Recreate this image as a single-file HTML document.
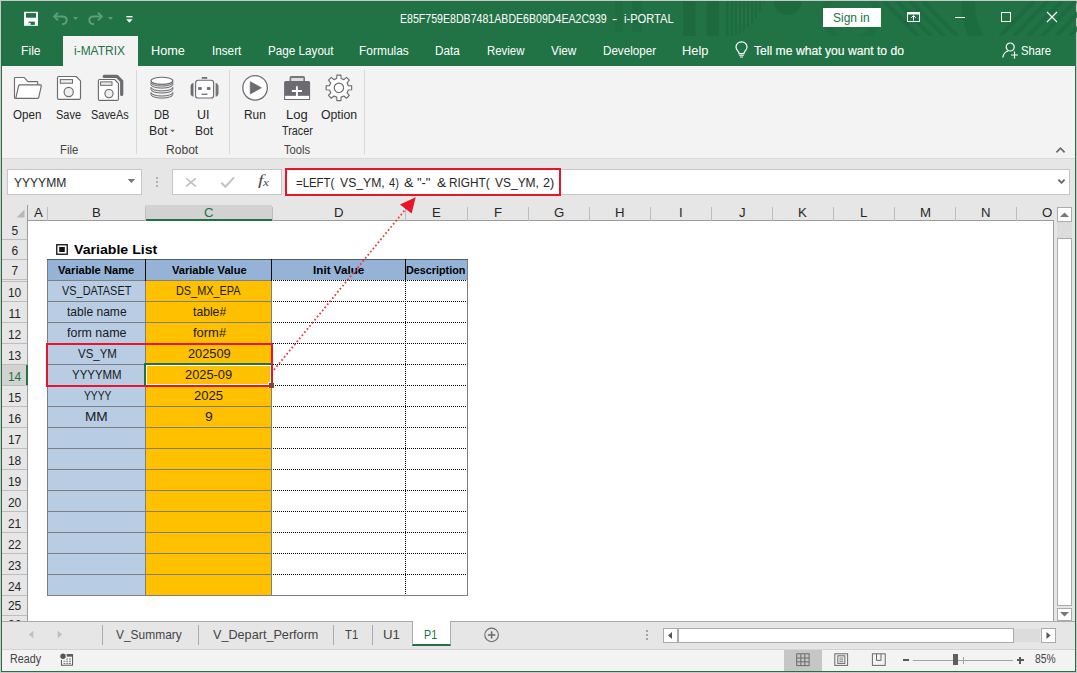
<!DOCTYPE html>
<html lang="en">
<head>
<meta charset="utf-8">
<title>i-PORTAL</title>
<style>
*{box-sizing:border-box;margin:0;padding:0}
html,body{width:1077px;height:673px;overflow:hidden;background:#217346}
body{font-family:"Liberation Sans","NanumGothic",sans-serif;font-size:12px;color:#262626;position:relative}
.a{position:absolute}
.t{position:absolute;white-space:pre;line-height:1;transform-origin:0 0}
svg{position:absolute;overflow:visible}
.hl{position:absolute;height:1px}
.vl{position:absolute;width:1px}
</style>
</head>
<body>
<!-- window frame -->
<div class="a" style="left:0;top:0;width:1077px;height:673px;background:#217346"></div>
<div class="a" style="left:0;top:0;width:1px;height:673px;background:#cdc7ca"></div>
<div class="a" style="left:0;top:0;width:1077px;height:1px;background:#cdc7ca"></div>
<div class="a" style="left:1076px;top:0;width:1px;height:673px;background:#cdc7ca"></div>
<div class="a" style="left:0;top:672px;width:1077px;height:1px;background:#cdc7ca"></div>

<!-- title bar pattern -->
<svg class="a" style="left:0;top:1px" width="1075" height="35" viewBox="0 0 1075 35">
<defs><clipPath id="cp1"><circle cx="712" cy="-14" r="54"/></clipPath><clipPath id="cp0"><rect x="0" y="0" width="1077" height="35"/></clipPath></defs>
<g clip-path="url(#cp0)">
<rect x="615" y="0" width="8" height="31" fill="#1d6a3f" opacity="0.6"/>
<rect x="632" y="0" width="10" height="31" fill="#1d6a3f" opacity="0.6"/>
<rect x="683" y="0" width="12.5" height="35" fill="#1d6a3f"/>
<rect x="706.5" y="0" width="12.5" height="35" fill="#1d6a3f"/>
<g clip-path="url(#cp1)">
<rect x="726" y="0" width="2.5" height="35" fill="#1d6a3f"/>
<rect x="731" y="0" width="2" height="35" fill="#1d6a3f"/>
<rect x="735" y="0" width="2" height="35" fill="#1d6a3f"/>
<rect x="739" y="0" width="2" height="35" fill="#1d6a3f"/>
<rect x="743" y="0" width="2" height="35" fill="#1d6a3f"/>
<rect x="747" y="0" width="2" height="35" fill="#1d6a3f"/>
<rect x="751" y="0" width="2" height="35" fill="#1d6a3f"/>
<rect x="755" y="0" width="2" height="35" fill="#1d6a3f"/>
<rect x="759" y="0" width="2" height="35" fill="#1d6a3f"/>
<rect x="763" y="0" width="2" height="35" fill="#1d6a3f"/>
</g>
<circle cx="787.5" cy="0" r="14" fill="#1d6a3f"/>
<circle cx="851" cy="14" r="26" fill="none" stroke="#1d6a3f" stroke-width="7" opacity="0.6"/>
<path d="M884 0L918 35" stroke="#1d6a3f" stroke-width="4" opacity="0.8"/>
<path d="M897 0L931 35" stroke="#1d6a3f" stroke-width="4" opacity="0.8"/>
<path d="M910 0L944 35" stroke="#1d6a3f" stroke-width="4" opacity="0.8"/>
<path d="M923 0L957 35" stroke="#1d6a3f" stroke-width="4" opacity="0.8"/>
<circle cx="1040" cy="2" r="72" fill="none" stroke="#1d6a3f" stroke-width="14" opacity="0.8"/>
<path d="M1000 35L1034 0" stroke="#1d6a3f" stroke-width="4" opacity="0.8"/>
<path d="M1014 35L1048 0" stroke="#1d6a3f" stroke-width="4" opacity="0.8"/>
<path d="M1028 35L1062 0" stroke="#1d6a3f" stroke-width="4" opacity="0.8"/>
<path d="M1042 35L1076 0" stroke="#1d6a3f" stroke-width="4" opacity="0.8"/>
<path d="M1056 35L1090 0" stroke="#1d6a3f" stroke-width="4" opacity="0.8"/>
<path d="M1070 35L1104 0" stroke="#1d6a3f" stroke-width="4" opacity="0.8"/>
</g>
</svg>

<!-- QAT -->
<svg style="left:0;top:0" width="40" height="30" viewBox="0 0 40 30"><rect x="24" y="11.8" width="14" height="14" fill="#fff"/><rect x="26" y="13.1" width="10" height="4.6" fill="#217346"/><rect x="28.6" y="21.6" width="6.2" height="3.3" fill="#217346"/><rect x="28.6" y="22.9" width="1.9" height="2" fill="#fff"/></svg>
<svg style="left:52.5px;top:12px" width="15" height="13" viewBox="0 0 15 13"><path d="M5 0.8L1.2 4.6L5 8.4" fill="none" stroke="#5d9d7c" stroke-width="2"/><path d="M1.5 4.6H9.5C12.5 4.6 13.7 6.4 13.7 8.2C13.7 10.4 12 12 9 12.2" fill="none" stroke="#5d9d7c" stroke-width="2"/></svg>
<svg style="left:73px;top:17px" width="5" height="3" viewBox="0 0 5 3"><path d="M0 0H5L2.5 3Z" fill="#5d9d7c"/></svg>
<svg style="left:87.5px;top:12px" width="15" height="13" viewBox="0 0 15 13"><path d="M10 0.8L13.8 4.6L10 8.4" fill="none" stroke="#5d9d7c" stroke-width="2"/><path d="M13.5 4.6H5.5C2.5 4.6 1.3 6.4 1.3 8.2C1.3 10.4 3 12 6 12.2" fill="none" stroke="#5d9d7c" stroke-width="2"/></svg>
<svg style="left:108px;top:17px" width="5" height="3" viewBox="0 0 5 3"><path d="M0 0H5L2.5 3Z" fill="#5d9d7c"/></svg>
<svg style="left:126px;top:15.5px" width="7" height="7" viewBox="0 0 7 7"><rect x="0.3" y="0" width="6.2" height="1.4" fill="#fff"/><path d="M0.2 3.2H6.6L3.4 6.8Z" fill="#fff"/></svg>

<!-- sign in / window buttons -->
<div class="a" style="left:823px;top:8px;width:58px;height:19px;background:#fff"></div>
<svg style="left:907px;top:12px" width="13" height="10" viewBox="0 0 13 10"><rect x="0.5" y="0.5" width="12" height="9" fill="none" stroke="#fff" stroke-width="1"/><rect x="0.5" y="0.5" width="12" height="2" fill="#fff"/><path d="M6.5 3.6V8.5M4.2 5.8L6.5 3.6L8.8 5.8" fill="none" stroke="#fff" stroke-width="1"/></svg>
<div class="a" style="left:955px;top:17px;width:10px;height:1px;background:#fff"></div>
<div class="a" style="left:1001px;top:12px;width:10px;height:10px;border:1px solid #fff"></div>
<svg style="left:1047px;top:12px" width="10" height="10" viewBox="0 0 10 10"><path d="M0 0L10 10M10 0L0 10" stroke="#fff" stroke-width="1.1"/></svg>
<svg style="left:735px;top:41px" width="13" height="17" viewBox="0 0 13 17"><path d="M6.5 0.8C3.3 0.8 1 3.1 1 6C1 8 2.2 9.2 3.2 10.4C3.8 11.1 4 11.8 4 12.6H9C9 11.8 9.2 11.1 9.8 10.4C10.8 9.2 12 8 12 6C12 3.1 9.7 0.8 6.5 0.8Z" fill="none" stroke="#fff" stroke-width="1.2"/><path d="M4.2 14.3H8.8M5 16H8" stroke="#fff" stroke-width="1.1"/></svg>
<svg style="left:1002px;top:42px" width="17" height="17" viewBox="0 0 17 17"><circle cx="8.2" cy="5" r="4" fill="none" stroke="#fff" stroke-width="1.2"/><path d="M0.8 15.5C1.5 11.5 3.8 9.6 6 9" fill="none" stroke="#fff" stroke-width="1.2"/><path d="M12.5 9.5V16.5M9 13H16" stroke="#fff" stroke-width="1.2"/></svg>

<!-- active tab -->
<div class="a" style="left:63px;top:36px;width:75px;height:30px;background:#f3f3f3"></div>

<!-- ribbon -->
<div class="a" style="left:2px;top:66px;width:1073px;height:92px;background:#f3f3f3"></div>
<div class="a" style="left:2px;top:158px;width:1073px;height:1px;background:#dadada"></div>
<div class="vl" style="left:136px;top:70px;height:84px;background:#d8d8d8"></div>
<div class="vl" style="left:229px;top:70px;height:84px;background:#d8d8d8"></div>
<div class="vl" style="left:364px;top:70px;height:84px;background:#d8d8d8"></div>
<svg style="left:12px;top:74px" width="32" height="28" viewBox="12 74 32 28"><path d="M16.6 98.3L15.2 98.3Q14.5 98.3 14.5 97.5V78.3Q14.5 77.5 15.3 77.5H23.6Q24.3 77.5 24.8 78.1L27.4 81.2Q27.8 81.6 28.4 81.6H37Q37.7 81.6 37.7 82.4V84.9" fill="#fff" stroke="#6c6c70" stroke-width="1.15" stroke-linejoin="round"/><path d="M19.9 84.9H40.6Q41.5 84.9 41.3 85.8L38.7 97.6Q38.5 98.3 37.7 98.3H16.6Q15.8 98.3 16 97.4L18.6 85.8Q18.9 84.9 19.9 84.9Z" fill="#fff" stroke="#6c6c70" stroke-width="1.15" stroke-linejoin="round"/></svg>
<svg style="left:55px;top:74px" width="28" height="28" viewBox="55 74 28 28"><path d="M58.8 76.5H76.2L80.5 80.8V98Q80.5 99.3 79.2 99.3H58.8Q57.5 99.3 57.5 98V77.8Q57.5 76.5 58.8 76.5Z" fill="#fff" stroke="#6c6c70" stroke-width="1.15" stroke-linejoin="round"/><rect x="60.3" y="79.6" width="12.2" height="3.6" fill="#efefef" stroke="#6c6c70" stroke-width="1.05"/><circle cx="68.7" cy="92" r="4.6" fill="#efefef" stroke="#6c6c70" stroke-width="1.15"/></svg>
<svg style="left:95px;top:72px" width="32" height="32" viewBox="95 72 32 32"><path d="M104.2 76.4H117L121.7 81.1V94.4" fill="none" stroke="#6c6c70" stroke-width="3.2" stroke-linejoin="round" stroke-linecap="round"/><path d="M99.6 79.5H114.6L118.4 83.3V99.2Q118.4 100.4 117.2 100.4H99.6Q98.4 100.4 98.4 99.2V80.7Q98.4 79.5 99.6 79.5Z" fill="#fff" stroke="#6c6c70" stroke-width="1.15" stroke-linejoin="round"/><rect x="100.6" y="81.9" width="11.4" height="3.4" fill="#efefef" stroke="#6c6c70" stroke-width="1.05"/><circle cx="109" cy="93.6" r="4.1" fill="#efefef" stroke="#6c6c70" stroke-width="1.15"/></svg>
<svg style="left:149px;top:75px" width="26" height="26" viewBox="149 75 26 26"><path d="M151 82.50A10.9 3.5 0 0 0 172.8 82.50L172.8 84.60A10.9 3.5 0 0 1 151 84.60Z" fill="#e9e9e9" stroke="#6c6c70" stroke-width="1" stroke-linejoin="round"/><path d="M151 87.40A10.9 3.5 0 0 0 172.8 87.40L172.8 89.50A10.9 3.5 0 0 1 151 89.50Z" fill="#e9e9e9" stroke="#6c6c70" stroke-width="1" stroke-linejoin="round"/><path d="M151 92.50A10.9 3.5 0 0 0 172.8 92.50L172.8 94.60A10.9 3.5 0 0 1 151 94.60Z" fill="#e9e9e9" stroke="#6c6c70" stroke-width="1" stroke-linejoin="round"/><ellipse cx="161.9" cy="80.8" rx="10.9" ry="3.6" fill="#fff" stroke="#6c6c70" stroke-width="1.15"/></svg>
<svg style="left:188px;top:75px" width="32" height="26" viewBox="188 75 32 26"><rect x="201.7" y="77" width="5.6" height="1.8" rx="0.6" fill="#6c6c70"/><rect x="195.6" y="80.2" width="18" height="17.8" rx="2.6" fill="#fff" stroke="#6c6c70" stroke-width="1.15"/><path d="M193.5 82.8V96.8Q190.6 96 190.6 93.5V86Q190.6 83.6 193.5 82.8Z" fill="#6c6c70"/><path d="M215.6 82.8V96.8Q218.5 96 218.5 93.5V86Q218.5 83.6 215.6 82.8Z" fill="#777"/><rect x="198.2" y="87.1" width="3.5" height="2.8" fill="#6c6c70"/><rect x="206.9" y="87.1" width="3.5" height="2.8" fill="#6c6c70"/><rect x="201.5" y="93.6" width="6" height="1.3" fill="#6c6c70"/></svg>
<svg style="left:240px;top:73px" width="30" height="30" viewBox="240 73 30 30"><circle cx="255.1" cy="87.8" r="12.3" fill="#fff" stroke="#6c6c70" stroke-width="1.25"/><path d="M250.3 81.7V93.9L261.4 87.8Z" fill="#6c6c70" stroke="#6c6c70" stroke-width="0.8" stroke-linejoin="round"/></svg>
<svg style="left:282px;top:74px" width="30" height="28" viewBox="282 74 30 28"><path d="M289.6 81.2V77.4Q289.6 75.9 291.1 75.9H303.5Q305 75.9 305 77.4V81.2Z" fill="#777"/><rect x="291.2" y="78" width="12.2" height="3" fill="#dedede"/><path d="M284.1 95.5V82.6Q284.1 81.1 285.6 81.1H308.6Q310.1 81.1 310.1 82.6V95.5Z" fill="#6c6c70"/><rect x="284.6" y="95.3" width="25" height="4.2" fill="#fff" stroke="#6c6c70" stroke-width="1"/><path d="M296.9 86.3V96M291.8 91H302" stroke="#fff" stroke-width="1.9"/></svg>
<svg style="left:325px;top:74px" width="29" height="29" viewBox="325 74 29 29"><path d="M336.66 78.46L336.91 75.05L340.89 75.05L341.14 78.46L343.92 79.62L346.50 77.38L349.32 80.20L347.08 82.78L348.24 85.56L351.65 85.81L351.65 89.79L348.24 90.04L347.08 92.82L349.32 95.40L346.50 98.22L343.92 95.98L341.14 97.14L340.89 100.55L336.91 100.55L336.66 97.14L333.88 95.98L331.30 98.22L328.48 95.40L330.72 92.82L329.56 90.04L326.15 89.79L326.15 85.81L329.56 85.56L330.72 82.78L328.48 80.20L331.30 77.38L333.88 79.62Z" fill="#fff" stroke="#6c6c70" stroke-width="1.15" stroke-linejoin="round"/><circle cx="338.9" cy="87.8" r="4.7" fill="#fff" stroke="#6c6c70" stroke-width="1.15"/></svg>
<svg style="left:170px;top:129px" width="5" height="4" viewBox="170 129 5 4"><path d="M170.2 129.7H175L172.6 132.3Z" fill="#6a6a6a"/></svg>
<svg style="left:1055px;top:146px" width="11" height="8" viewBox="1055 146 11 8"><path d="M1056.4 152.4L1060.5 148.2L1064.6 152.4" fill="none" stroke="#6a6a6a" stroke-width="1.7"/></svg>

<!-- formula bar -->
<div class="a" style="left:2px;top:159px;width:1073px;height:46px;background:#e6e6e6"></div>
<div class="a" style="left:7px;top:169px;width:135px;height:26px;background:#fff;border:1px solid #c6c6c6"></div>
<div class="a" style="left:172px;top:169px;width:110px;height:26px;background:#fff;border:1px solid #c6c6c6"></div>
<div class="a" style="left:285px;top:169px;width:785px;height:26px;background:#fff;border:1px solid #c6c6c6"></div>
<div class="a" style="left:285px;top:168px;width:276px;height:28px;border:2px solid #e8152a"></div>
<svg style="left:127px;top:179px" width="9" height="4" viewBox="127 179 9 4"><path d="M127.7 179.1H135.1L131.4 182.9Z" fill="#777"/></svg>
<div class="a" style="left:156px;top:177px;width:2px;height:2px;background:#b0b0b0"></div>
<div class="a" style="left:156px;top:181px;width:2px;height:2px;background:#b0b0b0"></div>
<div class="a" style="left:156px;top:185px;width:2px;height:2px;background:#b0b0b0"></div>
<svg style="left:185px;top:177px" width="12" height="11" viewBox="185 177 12 11"><path d="M186.2 178.2L195.8 186.4M195.8 178.2L186.2 186.4" stroke="#bcbcbc" stroke-width="1.5" fill="none"/></svg>
<svg style="left:220px;top:176px" width="15" height="12" viewBox="220 176 15 12"><path d="M221.3 182.8L225.4 186.8L234 177.4" stroke="#c2c2c2" stroke-width="2" fill="none"/></svg>
<svg style="left:1057px;top:178px" width="9" height="7" viewBox="1057 178 9 7"><path d="M1058.4 179.6L1061.5 182.8L1064.6 179.6" fill="none" stroke="#5f5f5f" stroke-width="1.7"/></svg>

<!-- grid -->
<div class="a" style="left:2px;top:205px;width:1073px;height:416px;background:#e6e6e6"></div>
<div class="a" style="left:28px;top:221px;width:1025px;height:400px;background:#fff"></div>
<div class="a" style="left:145px;top:205px;width:127px;height:16px;background:#d2d2d2;border-bottom:2px solid #217346"></div>
<div class="hl" style="left:28px;top:220px;width:117px;background:#9c9c9c"></div>
<div class="hl" style="left:272px;top:220px;width:782px;background:#9c9c9c"></div>
<div class="vl" style="left:47px;top:207px;height:14px;background:#bdbdbd"></div>
<div class="vl" style="left:145px;top:207px;height:14px;background:#bdbdbd"></div>
<div class="vl" style="left:272px;top:207px;height:14px;background:#bdbdbd"></div>
<div class="vl" style="left:405px;top:207px;height:14px;background:#bdbdbd"></div>
<div class="vl" style="left:467px;top:207px;height:14px;background:#bdbdbd"></div>
<div class="vl" style="left:528px;top:207px;height:14px;background:#bdbdbd"></div>
<div class="vl" style="left:589px;top:207px;height:14px;background:#bdbdbd"></div>
<div class="vl" style="left:650px;top:207px;height:14px;background:#bdbdbd"></div>
<div class="vl" style="left:711px;top:207px;height:14px;background:#bdbdbd"></div>
<div class="vl" style="left:772px;top:207px;height:14px;background:#bdbdbd"></div>
<div class="vl" style="left:833px;top:207px;height:14px;background:#bdbdbd"></div>
<div class="vl" style="left:894px;top:207px;height:14px;background:#bdbdbd"></div>
<div class="vl" style="left:955px;top:207px;height:14px;background:#bdbdbd"></div>
<div class="vl" style="left:1016px;top:207px;height:14px;background:#bdbdbd"></div>
<div class="vl" style="left:27px;top:205px;height:416px;background:#9c9c9c"></div>
<svg style="left:16px;top:209px" width="9" height="9" viewBox="0 0 9 9"><path d="M8.5 0.5V8.5H0.5Z" fill="#b7b7b7"/></svg>
<div class="hl" style="left:2px;top:239px;width:25px;background:#bdbdbd"></div>
<div class="hl" style="left:2px;top:259px;width:25px;background:#bdbdbd"></div>
<div class="hl" style="left:2px;top:279px;width:25px;background:#bdbdbd"></div>
<div class="hl" style="left:2px;top:281px;width:25px;background:#bdbdbd"></div>
<div class="hl" style="left:2px;top:301px;width:25px;background:#bdbdbd"></div>
<div class="hl" style="left:2px;top:322px;width:25px;background:#bdbdbd"></div>
<div class="hl" style="left:2px;top:343px;width:25px;background:#bdbdbd"></div>
<div class="hl" style="left:2px;top:364px;width:25px;background:#bdbdbd"></div>
<div class="hl" style="left:2px;top:385px;width:25px;background:#bdbdbd"></div>
<div class="hl" style="left:2px;top:406px;width:25px;background:#bdbdbd"></div>
<div class="hl" style="left:2px;top:427px;width:25px;background:#bdbdbd"></div>
<div class="hl" style="left:2px;top:448px;width:25px;background:#bdbdbd"></div>
<div class="hl" style="left:2px;top:469px;width:25px;background:#bdbdbd"></div>
<div class="hl" style="left:2px;top:490px;width:25px;background:#bdbdbd"></div>
<div class="hl" style="left:2px;top:511px;width:25px;background:#bdbdbd"></div>
<div class="hl" style="left:2px;top:532px;width:25px;background:#bdbdbd"></div>
<div class="hl" style="left:2px;top:553px;width:25px;background:#bdbdbd"></div>
<div class="hl" style="left:2px;top:574px;width:25px;background:#bdbdbd"></div>
<div class="hl" style="left:2px;top:595px;width:25px;background:#bdbdbd"></div>
<div class="hl" style="left:2px;top:615px;width:25px;background:#bdbdbd"></div>
<div class="a" style="left:2px;top:365px;width:26px;height:20px;background:#d2d2d2;border-right:2px solid #217346"></div>
<div class="vl" style="left:1053px;top:221px;height:400px;background:#9c9c9c"></div>
<div class="a" style="left:1057px;top:207px;width:15px;height:15px;background:#fff;border:1px solid #ababab"></div>
<svg style="left:1060px;top:212px" width="9" height="5" viewBox="0 0 9 5"><path d="M0 5L4.5 0.5L9 5Z" fill="#777"/></svg>
<div class="a" style="left:1057px;top:222px;width:15px;height:16px;background:#dcdcdc"></div>
<div class="a" style="left:1057px;top:238px;width:15px;height:368px;background:#fff;border:1px solid #ababab"></div>
<div class="a" style="left:1057px;top:608px;width:15px;height:13px;background:#fff;border:1px solid #ababab"></div>
<svg style="left:1060px;top:612px" width="9" height="5" viewBox="0 0 9 5"><path d="M0 0L4.5 4.5L9 0Z" fill="#777"/></svg>
<div class="a" style="left:48px;top:260px;width:419px;height:20px;background:#95b3d7"></div>
<div class="a" style="left:48px;top:281px;width:97px;height:314px;background:#b8cce4"></div>
<div class="a" style="left:146px;top:281px;width:126px;height:314px;background:#ffc000"></div>
<div class="hl" style="left:47px;top:280px;width:225px;background:#7f7f7f"></div>
<div class="hl" style="left:47px;top:301px;width:225px;background:#7f7f7f"></div>
<div class="hl" style="left:47px;top:322px;width:225px;background:#7f7f7f"></div>
<div class="hl" style="left:47px;top:343px;width:225px;background:#7f7f7f"></div>
<div class="hl" style="left:47px;top:364px;width:225px;background:#7f7f7f"></div>
<div class="hl" style="left:47px;top:385px;width:225px;background:#7f7f7f"></div>
<div class="hl" style="left:47px;top:406px;width:225px;background:#7f7f7f"></div>
<div class="hl" style="left:47px;top:427px;width:225px;background:#7f7f7f"></div>
<div class="hl" style="left:47px;top:448px;width:225px;background:#7f7f7f"></div>
<div class="hl" style="left:47px;top:469px;width:225px;background:#7f7f7f"></div>
<div class="hl" style="left:47px;top:490px;width:225px;background:#7f7f7f"></div>
<div class="hl" style="left:47px;top:511px;width:225px;background:#7f7f7f"></div>
<div class="hl" style="left:47px;top:532px;width:225px;background:#7f7f7f"></div>
<div class="hl" style="left:47px;top:553px;width:225px;background:#7f7f7f"></div>
<div class="hl" style="left:47px;top:574px;width:225px;background:#7f7f7f"></div>
<div class="hl" style="left:47px;top:595px;width:225px;background:#7f7f7f"></div>
<div class="vl" style="left:47px;top:259px;height:337px;background:#7f7f7f"></div>
<div class="vl" style="left:145px;top:281px;height:315px;background:#7f7f7f"></div>
<div class="vl" style="left:271px;top:281px;height:315px;background:#7f7f7f"></div>
<div class="vl" style="left:467px;top:259px;height:337px;background:#7f7f7f"></div>
<div class="hl" style="left:272px;top:595px;width:196px;background:#7f7f7f"></div>
<div class="hl" style="left:273px;top:280px;width:194px;background:repeating-linear-gradient(90deg,#000 0 1px,transparent 1px 2px)"></div>
<div class="hl" style="left:273px;top:301px;width:194px;background:repeating-linear-gradient(90deg,#000 0 1px,transparent 1px 2px)"></div>
<div class="hl" style="left:273px;top:322px;width:194px;background:repeating-linear-gradient(90deg,#000 0 1px,transparent 1px 2px)"></div>
<div class="hl" style="left:273px;top:343px;width:194px;background:repeating-linear-gradient(90deg,#000 0 1px,transparent 1px 2px)"></div>
<div class="hl" style="left:273px;top:364px;width:194px;background:repeating-linear-gradient(90deg,#000 0 1px,transparent 1px 2px)"></div>
<div class="hl" style="left:273px;top:385px;width:194px;background:repeating-linear-gradient(90deg,#000 0 1px,transparent 1px 2px)"></div>
<div class="hl" style="left:273px;top:406px;width:194px;background:repeating-linear-gradient(90deg,#000 0 1px,transparent 1px 2px)"></div>
<div class="hl" style="left:273px;top:427px;width:194px;background:repeating-linear-gradient(90deg,#000 0 1px,transparent 1px 2px)"></div>
<div class="hl" style="left:273px;top:448px;width:194px;background:repeating-linear-gradient(90deg,#000 0 1px,transparent 1px 2px)"></div>
<div class="hl" style="left:273px;top:469px;width:194px;background:repeating-linear-gradient(90deg,#000 0 1px,transparent 1px 2px)"></div>
<div class="hl" style="left:273px;top:490px;width:194px;background:repeating-linear-gradient(90deg,#000 0 1px,transparent 1px 2px)"></div>
<div class="hl" style="left:273px;top:511px;width:194px;background:repeating-linear-gradient(90deg,#000 0 1px,transparent 1px 2px)"></div>
<div class="hl" style="left:273px;top:532px;width:194px;background:repeating-linear-gradient(90deg,#000 0 1px,transparent 1px 2px)"></div>
<div class="hl" style="left:273px;top:553px;width:194px;background:repeating-linear-gradient(90deg,#000 0 1px,transparent 1px 2px)"></div>
<div class="hl" style="left:273px;top:574px;width:194px;background:repeating-linear-gradient(90deg,#000 0 1px,transparent 1px 2px)"></div>
<div class="vl" style="left:405px;top:281px;height:314px;background:repeating-linear-gradient(180deg,#000 0 1px,transparent 1px 2px)"></div>
<div class="hl" style="left:47px;top:259px;width:421px;background:#595959"></div>
<div class="a" style="left:145px;top:259px;width:1px;height:22px;background:#0a0a0a"></div>
<div class="a" style="left:271px;top:259px;width:1px;height:22px;background:#0a0a0a"></div>
<div class="a" style="left:405px;top:259px;width:1px;height:22px;background:#0a0a0a"></div>
<svg style="left:56px;top:244px" width="12" height="11" viewBox="0 0 12 11"><rect x="0.75" y="0.75" width="10.5" height="9.5" fill="#fff" stroke="#111" stroke-width="1.3"/><rect x="3.2" y="3" width="5.6" height="5" fill="#111"/></svg>

<!-- sheet tabs bar -->
<div class="a" style="left:2px;top:621px;width:1073px;height:28px;background:#e6e6e6"></div>
<div class="hl" style="left:2px;top:621px;width:1073px;background:#ababab"></div>
<div class="a" style="left:412px;top:621px;width:39px;height:25px;background:#fff;border-left:1px solid #ababab;border-right:1px solid #ababab;border-bottom:2px solid #217346"></div>
<div class="vl" style="left:102px;top:625px;height:20px;background:#ababab"></div>
<div class="vl" style="left:198px;top:625px;height:20px;background:#ababab"></div>
<div class="vl" style="left:333px;top:625px;height:20px;background:#ababab"></div>
<div class="vl" style="left:372px;top:625px;height:20px;background:#ababab"></div>
<svg style="left:28px;top:630px" width="6" height="9" viewBox="28 630 6 9"><path d="M33.3 630.8L28.8 634.5L33.3 638.2Z" fill="#bfbfbf"/></svg>
<svg style="left:57px;top:630px" width="6" height="9" viewBox="57 630 6 9"><path d="M57.7 630.8L62.2 634.5L57.7 638.2Z" fill="#bfbfbf"/></svg>
<svg style="left:483px;top:626px" width="18" height="18" viewBox="483 626 18 18"><circle cx="491.6" cy="634.9" r="6.8" fill="none" stroke="#6a6a6a" stroke-width="1.1"/><path d="M491.6 631.2V638.6M487.9 634.9H495.3" stroke="#6a6a6a" stroke-width="1.5"/></svg>
<div class="a" style="left:646px;top:630px;width:2px;height:2px;background:#a3a3a3"></div>
<div class="a" style="left:646px;top:634px;width:2px;height:2px;background:#a3a3a3"></div>
<div class="a" style="left:646px;top:638px;width:2px;height:2px;background:#a3a3a3"></div>
<div class="a" style="left:663px;top:628px;width:15px;height:15px;background:#fff;border:1px solid #ababab"></div>
<svg style="left:667px;top:631px" width="6" height="9" viewBox="667 631 6 9"><path d="M672 632L668 635.5L672 639Z" fill="#555"/></svg>
<div class="a" style="left:1013px;top:629px;width:27px;height:13px;background:#dcdcdc"></div>
<div class="a" style="left:678px;top:628px;width:336px;height:15px;background:#fff;border:1px solid #ababab"></div>
<div class="a" style="left:1041px;top:628px;width:15px;height:15px;background:#fff;border:1px solid #ababab"></div>
<svg style="left:1045px;top:631px" width="6" height="9" viewBox="1045 631 6 9"><path d="M1046.5 632L1050.5 635.5L1046.5 639Z" fill="#555"/></svg>

<!-- status bar -->
<div class="a" style="left:2px;top:649px;width:1073px;height:22px;background:#f3f3f3"></div>
<div class="hl" style="left:2px;top:649px;width:1073px;background:#d4d4d4"></div>
<svg style="left:59px;top:652px" width="16" height="15" viewBox="59 652 16 15"><rect x="61.5" y="654.6" width="11" height="10.6" fill="#fff" stroke="#5e5e5e" stroke-width="1.1"/><rect x="61.5" y="654.1" width="11" height="2.6" fill="#5e5e5e"/><path d="M63.4 659H65.4M66.2 659H68.2M69 659H71M63.4 661.2H65.4M66.2 661.2H68.2M69 661.2H71M63.4 663.4H65.4M66.2 663.4H68.2M69 663.4H71" stroke="#5e5e5e" stroke-width="0.9"/><circle cx="63" cy="656.2" r="3.3" fill="#555" stroke="#f3f3f3" stroke-width="1.2"/></svg>
<div class="a" style="left:784px;top:650px;width:38px;height:21px;background:#c6c6c6"></div>
<svg style="left:795px;top:653px" width="16" height="14" viewBox="795 653 16 14"><rect x="796.7" y="653.8" width="12.4" height="11.8" fill="none" stroke="#6a6a6a" stroke-width="1"/><path d="M800.8 654.2V665.6M804.8 654.2V665.6M796.7 658H808.9M796.7 661.8H808.9" stroke="#6a6a6a" stroke-width="1"/></svg>
<svg style="left:833px;top:653px" width="16" height="14" viewBox="833 653 16 14"><rect x="834.8" y="653.8" width="12.8" height="11.6" fill="none" stroke="#6a6a6a" stroke-width="1"/><rect x="837.8" y="655.8" width="7" height="7.6" fill="none" stroke="#6a6a6a" stroke-width="1"/><path d="M839.4 658H843.2M839.4 659.8H843.2M839.4 661.6H843.2" stroke="#6a6a6a" stroke-width="0.8"/></svg>
<svg style="left:871px;top:653px" width="16" height="14" viewBox="871 653 16 14"><rect x="872.4" y="653.8" width="12.8" height="11.6" fill="none" stroke="#6a6a6a" stroke-width="1"/><path d="M876.5 653.8V660.4H881V653.8" stroke="#6a6a6a" stroke-width="1" fill="none"/></svg>
<div class="a" style="left:903px;top:659px;width:6px;height:2px;background:#5a5a5a"></div>
<div class="hl" style="left:913px;top:660px;width:100px;background:#a3a3a3"></div>
<div class="vl" style="left:963px;top:657px;height:7px;background:#a3a3a3"></div>
<div class="a" style="left:953px;top:654px;width:5px;height:11px;background:#5f5f5f"></div>
<div class="a" style="left:1016.5px;top:659px;width:7px;height:2px;background:#5a5a5a"></div>
<div class="a" style="left:1019px;top:656.5px;width:2px;height:7px;background:#5a5a5a"></div>

<span class="t" style="left:399.65px;top:13.00px;font-size:12.5px;color:#ffffff;font-weight:400;font-family:'Liberation Sans',sans-serif;transform:scaleX(0.8477)">E85F759E8DB7481ABDE6B09D4EA2C939</span>
<span class="t" style="left:612.13px;top:13.00px;font-size:12.5px;color:#ffffff;font-weight:400;font-family:'Liberation Sans',sans-serif;transform:scaleX(1.2667)">-</span>
<span class="t" style="left:623.61px;top:13.00px;font-size:12.5px;color:#ffffff;font-weight:400;font-family:'Liberation Sans',sans-serif;transform:scaleX(0.8909)">i-PORTAL</span>
<span class="t" style="left:833.04px;top:11.60px;font-size:12.5px;color:#217346;font-weight:400;font-family:'Liberation Sans',sans-serif;transform:scaleX(0.9595)">Sign in</span>
<span class="t" style="left:21.03px;top:44.70px;font-size:12.5px;color:#ffffff;font-weight:400;font-family:'Liberation Sans',sans-serif;transform:scaleX(0.9737)">File</span>
<span class="t" style="left:74.24px;top:44.70px;font-size:12.5px;color:#217346;font-weight:400;font-family:'Liberation Sans',sans-serif;transform:scaleX(0.9577)">i-MATRIX</span>
<span class="t" style="left:151.48px;top:44.70px;font-size:12.5px;color:#ffffff;font-weight:400;font-family:'Liberation Sans',sans-serif;transform:scaleX(1.0156)">Home</span>
<span class="t" style="left:211.76px;top:44.70px;font-size:12.5px;color:#ffffff;font-weight:400;font-family:'Liberation Sans',sans-serif;transform:scaleX(0.9367)">Insert</span>
<span class="t" style="left:267.57px;top:44.70px;font-size:12.5px;color:#ffffff;font-weight:400;font-family:'Liberation Sans',sans-serif;transform:scaleX(0.9348)">Page Layout</span>
<span class="t" style="left:359.44px;top:44.70px;font-size:12.5px;color:#ffffff;font-weight:400;font-family:'Liberation Sans',sans-serif;transform:scaleX(0.9569)">Formulas</span>
<span class="t" style="left:435.36px;top:44.70px;font-size:12.5px;color:#ffffff;font-weight:400;font-family:'Liberation Sans',sans-serif;transform:scaleX(0.9360)">Data</span>
<span class="t" style="left:486.59px;top:44.70px;font-size:12.5px;color:#ffffff;font-weight:400;font-family:'Liberation Sans',sans-serif;transform:scaleX(0.9125)">Review</span>
<span class="t" style="left:551.00px;top:44.70px;font-size:12.5px;color:#ffffff;font-weight:400;font-family:'Liberation Sans',sans-serif;transform:scaleX(0.9444)">View</span>
<span class="t" style="left:602.97px;top:44.70px;font-size:12.5px;color:#ffffff;font-weight:400;font-family:'Liberation Sans',sans-serif;transform:scaleX(0.9304)">Developer</span>
<span class="t" style="left:682.18px;top:44.70px;font-size:12.5px;color:#ffffff;font-weight:400;font-family:'Liberation Sans',sans-serif;transform:scaleX(1.0250)">Help</span>
<span class="t" style="left:754.20px;top:44.70px;font-size:12.5px;color:#ffffff;font-weight:400;font-family:'Liberation Sans',sans-serif;-webkit-text-stroke:0.15px #ffffff;transform:scaleX(0.9727)">Tell me what you want to do</span>
<span class="t" style="left:1021.30px;top:44.70px;font-size:12.5px;color:#ffffff;font-weight:400;font-family:'Liberation Sans',sans-serif;transform:scaleX(0.9000)">Share</span>
<span class="t" style="left:12.60px;top:108.70px;font-size:12px;color:#262626;font-weight:400;font-family:'Liberation Sans',sans-serif;transform:scaleX(0.9655)">Open</span>
<span class="t" style="left:56.38px;top:108.70px;font-size:12px;color:#262626;font-weight:400;font-family:'Liberation Sans',sans-serif;transform:scaleX(0.9154)">Save</span>
<span class="t" style="left:91.29px;top:108.70px;font-size:12px;color:#262626;font-weight:400;font-family:'Liberation Sans',sans-serif;transform:scaleX(0.9125)">SaveAs</span>
<span class="t" style="left:153.67px;top:108.70px;font-size:12px;color:#262626;font-weight:400;font-family:'Liberation Sans',sans-serif;transform:scaleX(0.9267)">DB</span>
<span class="t" style="left:148.68px;top:125.30px;font-size:12px;color:#262626;font-weight:400;font-family:'Liberation Sans',sans-serif;transform:scaleX(1.0176)">Bot</span>
<span class="t" style="left:197.36px;top:108.70px;font-size:12px;color:#262626;font-weight:400;font-family:'Liberation Sans',sans-serif;transform:scaleX(1.0400)">UI</span>
<span class="t" style="left:194.59px;top:125.30px;font-size:12px;color:#262626;font-weight:400;font-family:'Liberation Sans',sans-serif;transform:scaleX(1.0059)">Bot</span>
<span class="t" style="left:243.60px;top:108.70px;font-size:12px;color:#262626;font-weight:400;font-family:'Liberation Sans',sans-serif;transform:scaleX(0.9950)">Run</span>
<span class="t" style="left:286.22px;top:108.70px;font-size:12px;color:#262626;font-weight:400;font-family:'Liberation Sans',sans-serif;transform:scaleX(1.0833)">Log</span>
<span class="t" style="left:282.40px;top:125.30px;font-size:12px;color:#262626;font-weight:400;font-family:'Liberation Sans',sans-serif;transform:scaleX(0.9000)">Tracer</span>
<span class="t" style="left:320.70px;top:108.70px;font-size:12px;color:#262626;font-weight:400;font-family:'Liberation Sans',sans-serif;transform:scaleX(1.0229)">Option</span>
<span class="t" style="left:59.86px;top:144.40px;font-size:12px;color:#444;font-weight:400;font-family:'Liberation Sans',sans-serif;transform:scaleX(0.9389)">File</span>
<span class="t" style="left:166.39px;top:144.40px;font-size:12px;color:#444;font-weight:400;font-family:'Liberation Sans',sans-serif;transform:scaleX(1.0065)">Robot</span>
<span class="t" style="left:283.80px;top:144.40px;font-size:12px;color:#444;font-weight:400;font-family:'Liberation Sans',sans-serif;transform:scaleX(0.9357)">Tools</span>
<span class="t" style="left:13.90px;top:177.00px;font-size:12.5px;color:#262626;font-weight:400;font-family:'Liberation Sans',sans-serif;transform:scaleX(0.9642)">YYYYMM</span>
<span class="t" style="left:296.49px;top:177.30px;font-size:12.5px;color:#262626;font-weight:400;font-family:'Liberation Sans',sans-serif;transform:scaleX(0.9122)">=LEFT(</span>
<span class="t" style="left:340.00px;top:177.30px;font-size:12.5px;color:#262626;font-weight:400;font-family:'Liberation Sans',sans-serif;transform:scaleX(0.9756)">VS_YM,</span>
<span class="t" style="left:388.80px;top:177.30px;font-size:12.5px;color:#262626;font-weight:400;font-family:'Liberation Sans',sans-serif;transform:scaleX(0.8818)">4)</span>
<span class="t" style="left:403.70px;top:177.30px;font-size:12.5px;color:#262626;font-weight:400;font-family:'Liberation Sans',sans-serif;transform:scaleX(1.1375)">&amp;</span>
<span class="t" style="left:417.40px;top:177.30px;font-size:12.5px;color:#262626;font-weight:400;font-family:'Liberation Sans',sans-serif;transform:scaleX(1.0308)">&quot;-&quot;</span>
<span class="t" style="left:437.00px;top:177.30px;font-size:12.5px;color:#262626;font-weight:400;font-family:'Liberation Sans',sans-serif;transform:scaleX(1.1000)">&amp;</span>
<span class="t" style="left:449.06px;top:177.30px;font-size:12.5px;color:#262626;font-weight:400;font-family:'Liberation Sans',sans-serif;transform:scaleX(0.9429)">RIGHT(</span>
<span class="t" style="left:495.20px;top:177.30px;font-size:12.5px;color:#262626;font-weight:400;font-family:'Liberation Sans',sans-serif;transform:scaleX(0.9578)">VS_YM,</span>
<span class="t" style="left:542.59px;top:177.30px;font-size:12.5px;color:#262626;font-weight:400;font-family:'Liberation Sans',sans-serif;transform:scaleX(1.0100)">2)</span>
<span class="t" style="left:257.50px;top:174.30px;font-size:14px;color:#4a4a4a;font-weight:400;font-family:'Liberation Serif',serif;font-style:italic;transform:scaleX(1.4167)">f</span>
<span class="t" style="left:263.20px;top:178.20px;font-size:10px;color:#4a4a4a;font-weight:400;font-family:'Liberation Serif',serif;font-style:italic;transform:scaleX(1.3500)">x</span>
<span class="t" style="left:74.30px;top:242.90px;font-size:13.5px;color:#000;font-weight:700;font-family:'Liberation Sans','NanumGothic',sans-serif;transform:scaleX(1.0468)">Variable List</span>
<span class="t" style="left:58.30px;top:264.40px;font-size:11.7px;color:#000;font-weight:700;font-family:'Liberation Sans','NanumGothic',sans-serif;transform:scaleX(0.9550)">Variable Name</span>
<span class="t" style="left:171.50px;top:264.40px;font-size:11.7px;color:#000;font-weight:700;font-family:'Liberation Sans','NanumGothic',sans-serif;transform:scaleX(0.9487)">Variable Value</span>
<span class="t" style="left:313.00px;top:264.40px;font-size:11.7px;color:#000;font-weight:700;font-family:'Liberation Sans','NanumGothic',sans-serif;transform:scaleX(1.0000)">Init Value</span>
<span class="t" style="left:406.48px;top:264.40px;font-size:11.7px;color:#000;font-weight:700;font-family:'Liberation Sans','NanumGothic',sans-serif;transform:scaleX(0.9238)">Description</span>
<span class="t" style="left:61.80px;top:285.10px;font-size:12.4px;color:#1a1a1a;font-weight:400;font-family:'Liberation Sans','NanumGothic',sans-serif;transform:scaleX(0.8810)">VS_DATASET</span>
<span class="t" style="left:175.72px;top:285.10px;font-size:12.4px;color:#1a1a1a;font-weight:400;font-family:'Liberation Sans','NanumGothic',sans-serif;transform:scaleX(0.8767)">DS_MX_EPA</span>
<span class="t" style="left:67.20px;top:306.10px;font-size:12.4px;color:#1a1a1a;font-weight:400;font-family:'Liberation Sans','NanumGothic',sans-serif;transform:scaleX(0.9721)">table name</span>
<span class="t" style="left:192.60px;top:306.10px;font-size:12.4px;color:#1a1a1a;font-weight:400;font-family:'Liberation Sans','NanumGothic',sans-serif;transform:scaleX(0.9818)">table#</span>
<span class="t" style="left:67.20px;top:327.10px;font-size:12.4px;color:#1a1a1a;font-weight:400;font-family:'Liberation Sans','NanumGothic',sans-serif;transform:scaleX(1.0051)">form name</span>
<span class="t" style="left:192.60px;top:327.10px;font-size:12.4px;color:#1a1a1a;font-weight:400;font-family:'Liberation Sans','NanumGothic',sans-serif;transform:scaleX(1.0452)">form#</span>
<span class="t" style="left:77.90px;top:348.10px;font-size:12.4px;color:#1a1a1a;font-weight:400;font-family:'Liberation Sans','NanumGothic',sans-serif;transform:scaleX(0.9244)">VS_YM</span>
<span class="t" style="left:187.57px;top:348.10px;font-size:12.4px;color:#1a1a1a;font-weight:400;font-family:'Liberation Sans','NanumGothic',sans-serif;transform:scaleX(1.0325)">202509</span>
<span class="t" style="left:72.30px;top:369.10px;font-size:12.4px;color:#1a1a1a;font-weight:400;font-family:'Liberation Sans','NanumGothic',sans-serif;transform:scaleX(0.9245)">YYYYMM</span>
<span class="t" style="left:184.96px;top:369.10px;font-size:12.4px;color:#1a1a1a;font-weight:400;font-family:'Liberation Sans','NanumGothic',sans-serif;transform:scaleX(1.0364)">2025-09</span>
<span class="t" style="left:83.50px;top:390.10px;font-size:12.4px;color:#1a1a1a;font-weight:400;font-family:'Liberation Sans','NanumGothic',sans-serif;transform:scaleX(0.8303)">YYYY</span>
<span class="t" style="left:194.25px;top:390.10px;font-size:12.4px;color:#1a1a1a;font-weight:400;font-family:'Liberation Sans','NanumGothic',sans-serif;transform:scaleX(1.0538)">2025</span>
<span class="t" style="left:85.30px;top:411.10px;font-size:12.4px;color:#1a1a1a;font-weight:400;font-family:'Liberation Sans','NanumGothic',sans-serif;transform:scaleX(1.1000)">MM</span>
<span class="t" style="left:204.88px;top:411.10px;font-size:12.4px;color:#1a1a1a;font-weight:400;font-family:'Liberation Sans','NanumGothic',sans-serif;transform:scaleX(1.1200)">9</span>
<span class="t" style="left:116.30px;top:628.00px;font-size:13px;color:#444;font-weight:400;font-family:'Liberation Sans',sans-serif;transform:scaleX(0.9194)">V_Summary</span>
<span class="t" style="left:212.70px;top:628.00px;font-size:13px;color:#444;font-weight:400;font-family:'Liberation Sans',sans-serif;transform:scaleX(0.9722)">V_Depart_Perform</span>
<span class="t" style="left:345.30px;top:628.00px;font-size:13px;color:#444;font-weight:400;font-family:'Liberation Sans',sans-serif;transform:scaleX(0.8667)">T1</span>
<span class="t" style="left:383.28px;top:628.00px;font-size:13px;color:#444;font-weight:400;font-family:'Liberation Sans',sans-serif;transform:scaleX(1.0200)">U1</span>
<span class="t" style="left:423.77px;top:628.00px;font-size:13px;color:#217346;font-weight:400;font-family:'Liberation Sans',sans-serif;transform:scaleX(0.8267)">P1</span>
<span class="t" style="left:9.61px;top:653.20px;font-size:12px;color:#444;font-weight:400;font-family:'Liberation Sans',sans-serif;transform:scaleX(0.8941)">Ready</span>
<span class="t" style="left:1035.10px;top:653.30px;font-size:12px;color:#444;font-weight:400;font-family:'Liberation Sans',sans-serif;transform:scaleX(0.8542)">85%</span>
<span class="t" style="left:33.60px;top:207.00px;font-size:12px;color:#262626;font-weight:400;font-family:'Liberation Sans',sans-serif;transform:scaleX(1.100)">A</span>
<span class="t" style="left:91.55px;top:207.00px;font-size:12px;color:#262626;font-weight:400;font-family:'Liberation Sans',sans-serif;transform:scaleX(1.100)">B</span>
<span class="t" style="left:204.05px;top:207.00px;font-size:12px;color:#217346;font-weight:400;font-family:'Liberation Sans',sans-serif;transform:scaleX(1.100)">C</span>
<span class="t" style="left:334.05px;top:207.00px;font-size:12px;color:#262626;font-weight:400;font-family:'Liberation Sans',sans-serif;transform:scaleX(1.100)">D</span>
<span class="t" style="left:431.55px;top:207.00px;font-size:12px;color:#262626;font-weight:400;font-family:'Liberation Sans',sans-serif;transform:scaleX(1.100)">E</span>
<span class="t" style="left:493.60px;top:207.00px;font-size:12px;color:#262626;font-weight:400;font-family:'Liberation Sans',sans-serif;transform:scaleX(1.100)">F</span>
<span class="t" style="left:553.50px;top:207.00px;font-size:12px;color:#262626;font-weight:400;font-family:'Liberation Sans',sans-serif;transform:scaleX(1.100)">G</span>
<span class="t" style="left:615.05px;top:207.00px;font-size:12px;color:#262626;font-weight:400;font-family:'Liberation Sans',sans-serif;transform:scaleX(1.100)">H</span>
<span class="t" style="left:679.35px;top:207.00px;font-size:12px;color:#262626;font-weight:400;font-family:'Liberation Sans',sans-serif;transform:scaleX(1.100)">I</span>
<span class="t" style="left:739.25px;top:207.00px;font-size:12px;color:#262626;font-weight:400;font-family:'Liberation Sans',sans-serif;transform:scaleX(1.100)">J</span>
<span class="t" style="left:798.05px;top:207.00px;font-size:12px;color:#262626;font-weight:400;font-family:'Liberation Sans',sans-serif;transform:scaleX(1.100)">K</span>
<span class="t" style="left:859.60px;top:207.00px;font-size:12px;color:#262626;font-weight:400;font-family:'Liberation Sans',sans-serif;transform:scaleX(1.100)">L</span>
<span class="t" style="left:919.50px;top:207.00px;font-size:12px;color:#262626;font-weight:400;font-family:'Liberation Sans',sans-serif;transform:scaleX(1.100)">M</span>
<span class="t" style="left:981.05px;top:207.00px;font-size:12px;color:#262626;font-weight:400;font-family:'Liberation Sans',sans-serif;transform:scaleX(1.100)">N</span>
<span class="t" style="left:1042.05px;top:207.00px;font-size:12px;color:#262626;font-weight:400;font-family:'Liberation Sans',sans-serif;transform:scaleX(1.100)">O</span>
<span class="t" style="left:11.40px;top:224.90px;font-size:12px;color:#262626;font-weight:400;font-family:'Liberation Sans',sans-serif;transform:scaleX(1.000)">5</span>
<span class="t" style="left:11.40px;top:244.60px;font-size:12px;color:#262626;font-weight:400;font-family:'Liberation Sans',sans-serif;transform:scaleX(1.000)">6</span>
<span class="t" style="left:11.40px;top:264.80px;font-size:12px;color:#262626;font-weight:400;font-family:'Liberation Sans',sans-serif;transform:scaleX(1.000)">7</span>
<span class="t" style="left:7.90px;top:286.60px;font-size:12px;color:#262626;font-weight:400;font-family:'Liberation Sans',sans-serif;transform:scaleX(1.000)">10</span>
<span class="t" style="left:8.40px;top:307.60px;font-size:12px;color:#262626;font-weight:400;font-family:'Liberation Sans',sans-serif;transform:scaleX(1.000)">11</span>
<span class="t" style="left:7.90px;top:328.60px;font-size:12px;color:#262626;font-weight:400;font-family:'Liberation Sans',sans-serif;transform:scaleX(1.000)">12</span>
<span class="t" style="left:7.90px;top:349.60px;font-size:12px;color:#262626;font-weight:400;font-family:'Liberation Sans',sans-serif;transform:scaleX(1.000)">13</span>
<span class="t" style="left:7.90px;top:370.60px;font-size:12px;color:#217346;font-weight:400;font-family:'Liberation Sans',sans-serif;transform:scaleX(1.000)">14</span>
<span class="t" style="left:7.90px;top:391.60px;font-size:12px;color:#262626;font-weight:400;font-family:'Liberation Sans',sans-serif;transform:scaleX(1.000)">15</span>
<span class="t" style="left:7.90px;top:412.60px;font-size:12px;color:#262626;font-weight:400;font-family:'Liberation Sans',sans-serif;transform:scaleX(1.000)">16</span>
<span class="t" style="left:7.90px;top:433.60px;font-size:12px;color:#262626;font-weight:400;font-family:'Liberation Sans',sans-serif;transform:scaleX(1.000)">17</span>
<span class="t" style="left:7.90px;top:454.60px;font-size:12px;color:#262626;font-weight:400;font-family:'Liberation Sans',sans-serif;transform:scaleX(1.000)">18</span>
<span class="t" style="left:7.90px;top:475.60px;font-size:12px;color:#262626;font-weight:400;font-family:'Liberation Sans',sans-serif;transform:scaleX(1.000)">19</span>
<span class="t" style="left:7.90px;top:496.60px;font-size:12px;color:#262626;font-weight:400;font-family:'Liberation Sans',sans-serif;transform:scaleX(1.000)">20</span>
<span class="t" style="left:7.90px;top:517.60px;font-size:12px;color:#262626;font-weight:400;font-family:'Liberation Sans',sans-serif;transform:scaleX(1.000)">21</span>
<span class="t" style="left:7.90px;top:538.60px;font-size:12px;color:#262626;font-weight:400;font-family:'Liberation Sans',sans-serif;transform:scaleX(1.000)">22</span>
<span class="t" style="left:7.90px;top:559.60px;font-size:12px;color:#262626;font-weight:400;font-family:'Liberation Sans',sans-serif;transform:scaleX(1.000)">23</span>
<span class="t" style="left:7.90px;top:580.60px;font-size:12px;color:#262626;font-weight:400;font-family:'Liberation Sans',sans-serif;transform:scaleX(1.000)">24</span>
<span class="t" style="left:7.90px;top:600.20px;font-size:12px;color:#262626;font-weight:400;font-family:'Liberation Sans',sans-serif;transform:scaleX(1.000)">25</span>
<div class="a" style="left:2px;top:616px;width:25px;height:5px;overflow:hidden"><span class="t" style="left:6.00px;top:2.60px;font-size:12px;color:#262626">26</span></div>
<div class="a" style="left:144px;top:363px;width:129px;height:24px;border:2px solid #217346"></div>
<div class="a" style="left:146px;top:365px;width:125px;height:20px;border:1px solid #fff"></div>
<div class="a" style="left:268px;top:382px;width:6px;height:6px;background:#217346;border-top:1px solid #fff;border-left:1px solid #fff"></div>
<div class="a" style="left:46px;top:343px;width:227px;height:44px;border:2px solid #e8152a"></div>
<svg style="left:0;top:0" width="1077" height="673" viewBox="0 0 1077 673"><line x1="273" y1="371" x2="407.8" y2="206.5" stroke="#ea3a46" stroke-width="1.8" stroke-dasharray="1.7 2.3" stroke-dashoffset="-1.5"/><path d="M415.7 197.2L400 204.4L411.6 213.5Z" fill="#e8152a"/></svg>
</body>
</html>
